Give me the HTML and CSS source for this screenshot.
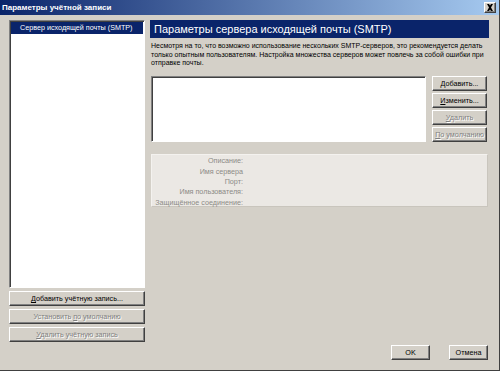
FILE: index.html
```html
<!DOCTYPE html>
<html lang="ru">
<head>
<meta charset="utf-8">
<title>Параметры учётной записи</title>
<link rel="stylesheet" href="styles.css">
</head>
<body>
<div class="window">
    <div class="titlebar">
        <span class="title">Параметры учётной записи</span>
        <span class="close"><svg width="8" height="7" viewBox="0 0 8 7"><path d="M1 0h2l1 1.5L5 0h2L5 3.5 7 7H5L4 5.5 3 7H1l2-3.5z" fill="#000"/></svg></span>
    </div>
    <div class="main">
        <div class="side">
            <div class="accounts">
                <div class="item on">Сервер исходящей почты (SMTP)</div>
            </div>
            <a href="javascript:;" class="btn"><span><u>Д</u>обавить учётную запись...</span></a>
            <a href="javascript:;" class="btn off"><span>Установить <u>п</u>о умолчанию</span></a>
            <a href="javascript:;" class="btn off"><span><u>У</u>далить учётную запись</span></a>
        </div>
        <div class="panel">
            <div class="panel-head">Параметры сервера исходящей почты (SMTP)</div>
            <p class="note">Несмотря на то, что возможно использование нескольких SMTP-серверов, это рекомендуется делать только опытным пользователям. Настройка множества серверов может повлечь за собой ошибки при отправке почты.</p>
            <div class="servers">
                <div class="server-list"></div>
                <div class="server-buttons">
                    <a href="javascript:;" class="btn"><span><u>Д</u>обавить...</span></a>
                    <a href="javascript:;" class="btn"><span><u>И</u>зменить...</span></a>
                    <a href="javascript:;" class="btn off"><span><u>У</u>далить</span></a>
                    <a href="javascript:;" class="btn off"><span><u>П</u>о умолчанию</span></a>
                </div>
            </div>
            <div class="details">
                <span class="label">Описание:</span><span class="value"></span>
                <span class="label">Имя сервера</span><span class="value"></span>
                <span class="label">Порт:</span><span class="value"></span>
                <span class="label">Имя пользователя:</span><span class="value"></span>
                <span class="label">Защищённое соединение:</span><span class="value"></span>
            </div>
        </div>
    </div>
    <div class="footer">
        <a href="javascript:;" class="btn"><span>OK</span></a>
        <a href="javascript:;" class="btn"><span>Отмена</span></a>
    </div>
</div>
</body>
</html>
```
FILE: styles.css
```css
* { margin: 0; padding: 0; box-sizing: border-box; text-decoration: none;}
body { width: 500px; height: 371px; overflow: hidden; background: #d4d0c8; font-family: "Liberation Sans", Arial, sans-serif; font-size: 7.2px; color: #000;}
.window { width: 500px; height: 371px; display: flex; flex-direction: column; border-right: 1px solid #404040; border-bottom: 1px solid #404040;}

/* заголовок окна */
.titlebar { height: 15px; display: flex; align-items: center; justify-content: space-between; padding: 0 3px 0 2px; background: linear-gradient(to right, #0a246a, #a6caf0); color: #fff;}
.title { font-size: 8px; font-weight: bold;}
.close { width: 12px; height: 11px; display: flex; align-items: center; justify-content: center; background: #d4d0c8; border: 1px solid; border-color: #fff #404040 #404040 #fff; box-shadow: inset -1px -1px #808080;}

.main { height: 327px; display: flex; gap: 5px; padding: 5px 0 0 9px;}

/* список учётных записей */
.side { width: 136px; display: flex; flex-direction: column; gap: 3px;}
.accounts { height: 268px; padding: 1px; background: #fff; border: 1px solid; border-color: #808080 #fff #fff #808080; box-shadow: inset 1px 1px #404040;}
.item { height: 12px; line-height: 12px; padding-left: 9px; white-space: nowrap;}
.item.on { background: #0a246a; color: #fff;}

/* кнопки */
.btn { display: flex; align-items: center; justify-content: center; height: 15px; color: #000; background: #d4d0c8; border: 1px solid; border-color: #fff #404040 #404040 #fff; box-shadow: inset -1px -1px #808080; white-space: nowrap;}
.btn u { text-decoration: underline;}
.btn.off { color: #808080; text-shadow: 1px 1px #fff;}

/* правая часть */
.panel { width: 339px; display: flex; flex-direction: column;}
.panel-head { height: 18px; display: flex; align-items: center; padding-left: 4px; background: #0a246a; color: #fff; font-size: 11px;}
.note { margin-top: 4px; padding-left: 1px; font-size: 7px; line-height: 8.5px;}
.servers { display: flex; gap: 6px; height: 66px; margin-top: 8px; padding-left: 1px;}
.server-list { width: 275px; background: #fff; border: 1px solid; border-color: #808080 #fff #fff #808080; box-shadow: inset 1px 1px #404040;}
.server-buttons { width: 55px; display: flex; flex-direction: column; gap: 2px;}

.details { display: grid; grid-template-columns: 91px 1fr; grid-auto-rows: 10.4px; align-items: center; height: 53px; margin: 12px 1px 0 1px; padding-top: 1px; background: #ebe8e4; border: 1px solid; border-color: #f4f2ef #c9c5bd #c9c5bd #f4f2ef;}
.label { text-align: right; white-space: nowrap; color: #8c8a86;}

.footer { display: flex; justify-content: flex-end; gap: 19px; padding: 3px 11px 0 0;}
.footer .btn { width: 39px;}
```
